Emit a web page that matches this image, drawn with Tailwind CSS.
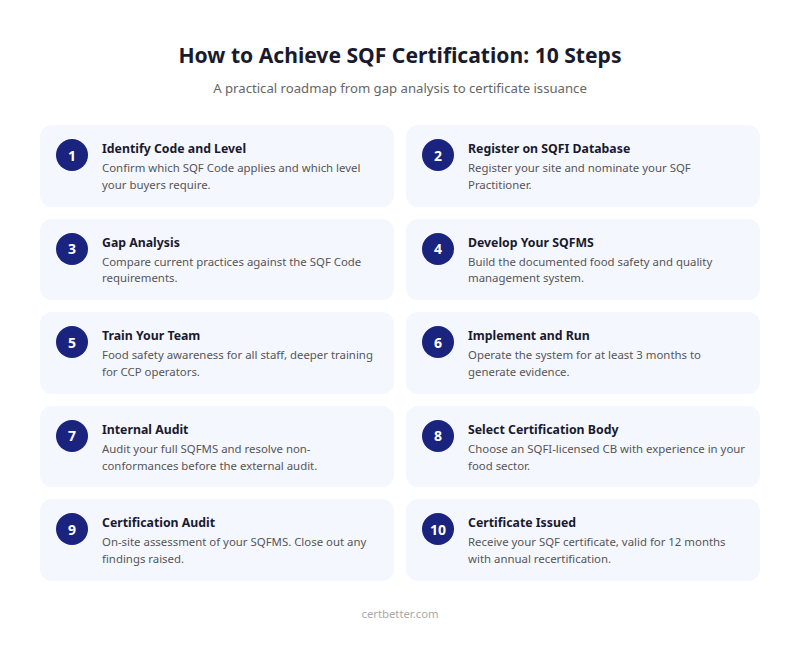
<!DOCTYPE html>
<html><head><meta charset="utf-8"><script src="https://cdn.jsdelivr.net/npm/@tailwindcss/browser@4"></script></head>
<body class="bg-white font-['Noto_Sans',sans-serif] w-[800px] h-[661px] overflow-hidden">
<div class="px-10 pt-10">
<h1 class="text-center text-[21.1px] leading-[30px] font-bold text-[#1a1a2e] mb-2">How to Achieve SQF Certification: 10 Steps</h1>
<p class="text-center text-[13.15px] leading-5 text-[#666] mb-[27px]">A practical roadmap from gap analysis to certificate issuance</p>
<div class="grid grid-cols-2 gap-3">
<div class="flex gap-[14px] items-start bg-[#f5f7ff] rounded-xl pl-4 pr-[14px] pt-[14px] pb-[13px]"><div class="w-8 h-8 rounded-full bg-[#1a237e] text-white text-[14px] font-bold flex items-center justify-center shrink-0">1</div><div class="pt-[1px]"><div class="text-[12.3px] leading-[18px] font-bold text-[#1a1a2e] mb-[2px]">Identify Code and Level</div><div class="text-[11.4px] leading-[16.8px] text-[#555]">Confirm which SQF Code applies and which level your buyers require.</div></div></div>
<div class="flex gap-[14px] items-start bg-[#f5f7ff] rounded-xl pl-4 pr-[14px] pt-[14px] pb-[13px]"><div class="w-8 h-8 rounded-full bg-[#1a237e] text-white text-[14px] font-bold flex items-center justify-center shrink-0">2</div><div class="pt-[1px]"><div class="text-[12.3px] leading-[18px] font-bold text-[#1a1a2e] mb-[2px]">Register on SQFI Database</div><div class="text-[11.4px] leading-[16.8px] text-[#555]">Register your site and nominate your SQF Practitioner.</div></div></div>
<div class="flex gap-[14px] items-start bg-[#f5f7ff] rounded-xl pl-4 pr-[14px] pt-[14px] pb-[13px]"><div class="w-8 h-8 rounded-full bg-[#1a237e] text-white text-[14px] font-bold flex items-center justify-center shrink-0">3</div><div class="pt-[1px]"><div class="text-[12.3px] leading-[18px] font-bold text-[#1a1a2e] mb-[2px]">Gap Analysis</div><div class="text-[11.4px] leading-[16.8px] text-[#555]">Compare current practices against the SQF Code requirements.</div></div></div>
<div class="flex gap-[14px] items-start bg-[#f5f7ff] rounded-xl pl-4 pr-[14px] pt-[14px] pb-[13px]"><div class="w-8 h-8 rounded-full bg-[#1a237e] text-white text-[14px] font-bold flex items-center justify-center shrink-0">4</div><div class="pt-[1px]"><div class="text-[12.3px] leading-[18px] font-bold text-[#1a1a2e] mb-[2px]">Develop Your SQFMS</div><div class="text-[11.4px] leading-[16.8px] text-[#555]">Build the documented food safety and quality management system.</div></div></div>
<div class="flex gap-[14px] items-start bg-[#f5f7ff] rounded-xl pl-4 pr-[14px] pt-[14px] pb-[13px]"><div class="w-8 h-8 rounded-full bg-[#1a237e] text-white text-[14px] font-bold flex items-center justify-center shrink-0">5</div><div class="pt-[1px]"><div class="text-[12.3px] leading-[18px] font-bold text-[#1a1a2e] mb-[2px]">Train Your Team</div><div class="text-[11.4px] leading-[16.8px] text-[#555]">Food safety awareness for all staff, deeper training for CCP operators.</div></div></div>
<div class="flex gap-[14px] items-start bg-[#f5f7ff] rounded-xl pl-4 pr-[14px] pt-[14px] pb-[13px]"><div class="w-8 h-8 rounded-full bg-[#1a237e] text-white text-[14px] font-bold flex items-center justify-center shrink-0">6</div><div class="pt-[1px]"><div class="text-[12.3px] leading-[18px] font-bold text-[#1a1a2e] mb-[2px]">Implement and Run</div><div class="text-[11.4px] leading-[16.8px] text-[#555]">Operate the system for at least 3 months to generate evidence.</div></div></div>
<div class="flex gap-[14px] items-start bg-[#f5f7ff] rounded-xl pl-4 pr-[14px] pt-[14px] pb-[13px]"><div class="w-8 h-8 rounded-full bg-[#1a237e] text-white text-[14px] font-bold flex items-center justify-center shrink-0">7</div><div class="pt-[1px]"><div class="text-[12.3px] leading-[18px] font-bold text-[#1a1a2e] mb-[2px]">Internal Audit</div><div class="text-[11.4px] leading-[16.8px] text-[#555]">Audit your full SQFMS and resolve non-conformances before the external audit.</div></div></div>
<div class="flex gap-[14px] items-start bg-[#f5f7ff] rounded-xl pl-4 pr-[14px] pt-[14px] pb-[13px]"><div class="w-8 h-8 rounded-full bg-[#1a237e] text-white text-[14px] font-bold flex items-center justify-center shrink-0">8</div><div class="pt-[1px]"><div class="text-[12.3px] leading-[18px] font-bold text-[#1a1a2e] mb-[2px]">Select Certification Body</div><div class="text-[11.4px] leading-[16.8px] text-[#555]">Choose an SQFI-licensed CB with experience in your food sector.</div></div></div>
<div class="flex gap-[14px] items-start bg-[#f5f7ff] rounded-xl pl-4 pr-[14px] pt-[14px] pb-[13px]"><div class="w-8 h-8 rounded-full bg-[#1a237e] text-white text-[14px] font-bold flex items-center justify-center shrink-0">9</div><div class="pt-[1px]"><div class="text-[12.3px] leading-[18px] font-bold text-[#1a1a2e] mb-[2px]">Certification Audit</div><div class="text-[11.4px] leading-[16.8px] text-[#555]">On-site assessment of your SQFMS. Close out any findings raised.</div></div></div>
<div class="flex gap-[14px] items-start bg-[#f5f7ff] rounded-xl pl-4 pr-[14px] pt-[14px] pb-[13px]"><div class="w-8 h-8 rounded-full bg-[#1a237e] text-white text-[14px] font-bold flex items-center justify-center shrink-0">10</div><div class="pt-[1px]"><div class="text-[12.3px] leading-[18px] font-bold text-[#1a1a2e] mb-[2px]">Certificate Issued</div><div class="text-[11.4px] leading-[16.8px] text-[#555]">Receive your SQF certificate, valid for 12 months with annual recertification.</div></div></div>
</div>
<p class="text-center text-[11.3px] leading-4 text-[#aaa] mt-[25px]">certbetter.com</p>
</div>
</body></html>
